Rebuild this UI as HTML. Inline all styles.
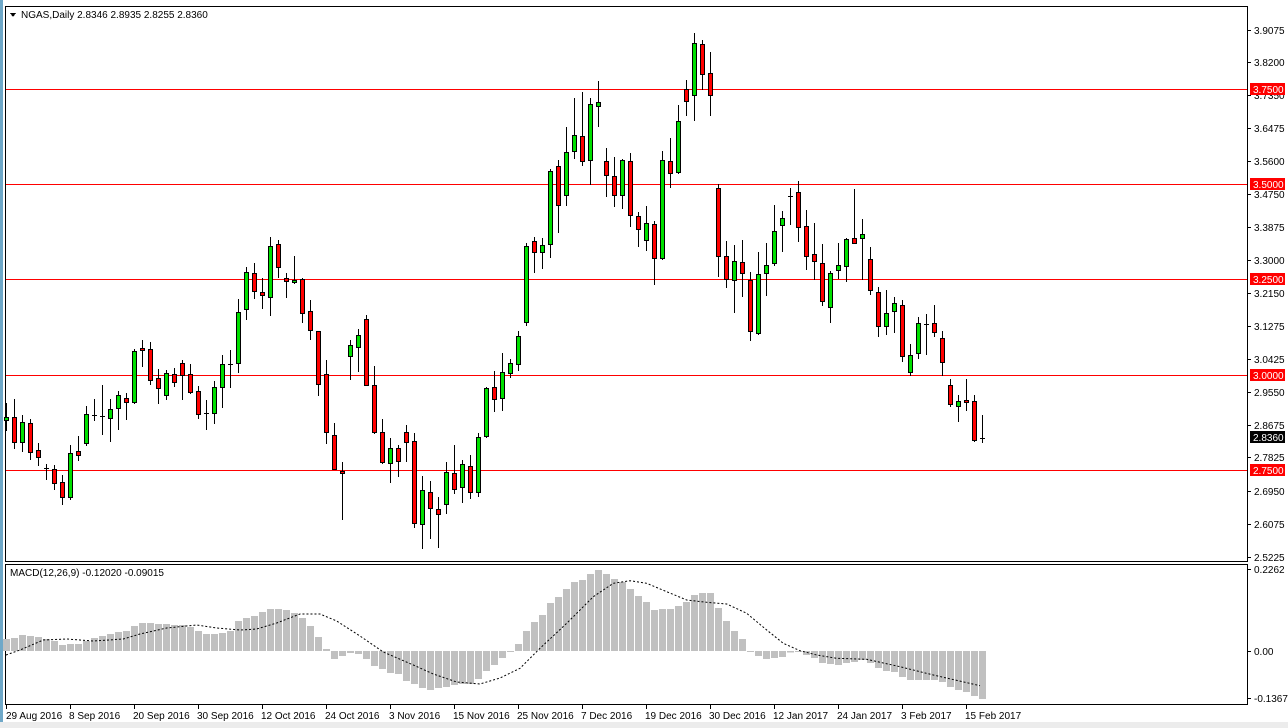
<!DOCTYPE html>
<html><head><meta charset="utf-8"><style>
html,body{margin:0;padding:0;background:#fff;width:1288px;height:728px;overflow:hidden}
svg{display:block}
text{font-family:"Liberation Sans",sans-serif;font-size:10px;fill:#000}
</style></head><body>
<svg id="s" width="1288" height="728" xmlns="http://www.w3.org/2000/svg" shape-rendering="crispEdges">
<rect x="0" y="0" width="1288" height="728" fill="#fff"/>
<rect x="0" y="0" width="3" height="728" fill="#6fa8c8"/>
<rect x="0" y="722" width="1288" height="6" fill="#ececec"/>
<!-- frames -->
<rect x="5.5" y="6.5" width="1242" height="555" fill="none" stroke="#000"/>
<rect x="5.5" y="564.5" width="1242" height="140" fill="none" stroke="#000"/>
<!-- header -->
<path d="M10 13 L16 13 L13 17 Z" fill="#000"/>
<text x="21" y="18" style="font-size:10px">NGAS,Daily  2.8346 2.8935 2.8255 2.8360</text>
<text x="10" y="576">MACD(12,26,9) -0.12020 -0.09015</text>
<!-- horizontal lines -->
<g stroke="#f00" stroke-width="1">
<line x1="6" y1="89.5" x2="1247" y2="89.5"/>
<line x1="6" y1="184.5" x2="1247" y2="184.5"/>
<line x1="6" y1="279.5" x2="1247" y2="279.5"/>
<line x1="6" y1="375.5" x2="1247" y2="375.5"/>
<line x1="6" y1="470.5" x2="1247" y2="470.5"/>
</g>
<g id="hist" fill="#c0c0c0"></g>
<g id="candles"></g>
<polyline id="sig" fill="none" stroke="#000" stroke-dasharray="2,2" shape-rendering="auto" points=""/>
<!-- price axis -->
<g stroke="#000">
<line x1="1248" y1="30.5" x2="1251" y2="30.5"/><line x1="1248" y1="62.5" x2="1251" y2="62.5"/><line x1="1248" y1="95.5" x2="1251" y2="95.5"/><line x1="1248" y1="128.5" x2="1251" y2="128.5"/><line x1="1248" y1="161.5" x2="1251" y2="161.5"/><line x1="1248" y1="194.5" x2="1251" y2="194.5"/><line x1="1248" y1="227.5" x2="1251" y2="227.5"/><line x1="1248" y1="260.5" x2="1251" y2="260.5"/><line x1="1248" y1="293.5" x2="1251" y2="293.5"/><line x1="1248" y1="326.5" x2="1251" y2="326.5"/><line x1="1248" y1="359.5" x2="1251" y2="359.5"/><line x1="1248" y1="392.5" x2="1251" y2="392.5"/><line x1="1248" y1="425.5" x2="1251" y2="425.5"/><line x1="1248" y1="457.5" x2="1251" y2="457.5"/><line x1="1248" y1="491.5" x2="1251" y2="491.5"/><line x1="1248" y1="524.5" x2="1251" y2="524.5"/><line x1="1248" y1="557.5" x2="1251" y2="557.5"/>
<line x1="1248" y1="569.5" x2="1251" y2="569.5"/><line x1="1248" y1="651.5" x2="1251" y2="651.5"/><line x1="1248" y1="698.5" x2="1251" y2="698.5"/>
</g>
<g>
<text x="1254" y="34">3.9075</text><text x="1254" y="66">3.8200</text><text x="1254" y="99">3.7350</text><text x="1254" y="132">3.6475</text><text x="1254" y="165">3.5600</text><text x="1254" y="198">3.4750</text><text x="1254" y="231">3.3875</text><text x="1254" y="264">3.3000</text><text x="1254" y="297">3.2150</text><text x="1254" y="330">3.1275</text><text x="1254" y="363">3.0425</text><text x="1254" y="396">2.9550</text><text x="1254" y="429">2.8675</text><text x="1254" y="461">2.7825</text><text x="1254" y="495">2.6950</text><text x="1254" y="528">2.6075</text><text x="1254" y="561">2.5225</text>
<text x="1254" y="573">0.2262</text><text x="1254" y="655">0.00</text><text x="1254" y="702">-0.1367</text>
</g>
<g>
<rect x="1250" y="83" width="35" height="12" fill="#f00"/><text x="1253" y="93" style="fill:#fff">3.7500</text>
<rect x="1250" y="178" width="35" height="12" fill="#f00"/><text x="1253" y="188" style="fill:#fff">3.5000</text>
<rect x="1250" y="273" width="35" height="12" fill="#f00"/><text x="1253" y="283" style="fill:#fff">3.2500</text>
<rect x="1250" y="369" width="35" height="12" fill="#f00"/><text x="1253" y="379" style="fill:#fff">3.0000</text>
<rect x="1250" y="464" width="35" height="12" fill="#f00"/><text x="1253" y="474" style="fill:#fff">2.7500</text>
<rect x="1250" y="431" width="35" height="12" fill="#000"/><text x="1253" y="441" style="fill:#fff">2.8360</text>
</g>
<!-- date axis -->
<g stroke="#000">
<line x1="6.5" y1="705" x2="6.5" y2="709"/><line x1="70.5" y1="705" x2="70.5" y2="709"/><line x1="134.5" y1="705" x2="134.5" y2="709"/><line x1="198.5" y1="705" x2="198.5" y2="709"/><line x1="262.5" y1="705" x2="262.5" y2="709"/><line x1="326.5" y1="705" x2="326.5" y2="709"/><line x1="390.5" y1="705" x2="390.5" y2="709"/><line x1="454.5" y1="705" x2="454.5" y2="709"/><line x1="518.5" y1="705" x2="518.5" y2="709"/><line x1="582.5" y1="705" x2="582.5" y2="709"/><line x1="646.5" y1="705" x2="646.5" y2="709"/><line x1="710.5" y1="705" x2="710.5" y2="709"/><line x1="774.5" y1="705" x2="774.5" y2="709"/><line x1="838.5" y1="705" x2="838.5" y2="709"/><line x1="902.5" y1="705" x2="902.5" y2="709"/><line x1="966.5" y1="705" x2="966.5" y2="709"/>
</g>
<g>
<text x="6" y="719">29 Aug 2016</text><text x="69" y="719">8 Sep 2016</text><text x="133" y="719">20 Sep 2016</text><text x="197" y="719">30 Sep 2016</text><text x="261" y="719">12 Oct 2016</text><text x="325" y="719">24 Oct 2016</text><text x="389" y="719">3 Nov 2016</text><text x="453" y="719">15 Nov 2016</text><text x="517" y="719">25 Nov 2016</text><text x="581" y="719">7 Dec 2016</text><text x="645" y="719">19 Dec 2016</text><text x="709" y="719">30 Dec 2016</text><text x="773" y="719">12 Jan 2017</text><text x="837" y="719">24 Jan 2017</text><text x="901" y="719">3 Feb 2017</text><text x="965" y="719">15 Feb 2017</text>
</g>
</svg>
<script>
var C=[[417,420,403,430,'g'],[417,442,399,448,'r'],[422,442,415,451,'g'],[423,452,419,459,'r'],[450,457,443,465,'r'],[468,468,464,479,'d'],[469,483,465,489,'r'],[482,497,475,504,'r'],[453,497,445,499,'g'],[451,455,436,460,'r'],[414,443,406,445,'g'],[415,415,399,420,'d'],[416,416,385,434,'d'],[409,418,399,441,'g'],[395,408,391,429,'g'],[398,402,393,419,'r'],[351,402,349,403,'g'],[348,350,340,366,'r'],[349,380,342,384,'r'],[378,388,369,403,'r'],[373,395,370,399,'g'],[374,382,368,386,'r'],[363,375,360,399,'r'],[374,392,364,393,'r'],[391,414,386,418,'r'],[413,413,400,429,'d'],[387,413,381,423,'g'],[364,387,355,407,'g'],[364,364,350,387,'d'],[312,363,299,372,'g'],[272,309,267,319,'g'],[273,291,263,298,'r'],[292,295,278,308,'r'],[246,297,237,315,'g'],[244,267,240,277,'r'],[278,281,273,297,'r'],[280,282,256,283,'g'],[279,313,278,322,'r'],[311,330,300,339,'r'],[331,384,331,395,'r'],[374,432,360,443,'r'],[435,469,423,469,'r'],[471,473,462,519,'r'],[345,356,340,379,'g'],[335,347,329,371,'g'],[319,385,315,385,'r'],[385,432,366,433,'r'],[432,462,419,463,'r'],[448,463,438,482,'g'],[448,461,445,476,'r'],[432,442,425,461,'r'],[441,523,433,527,'r'],[490,524,476,548,'g'],[492,508,481,538,'r'],[509,514,497,547,'r'],[472,504,462,513,'g'],[473,489,445,493,'r'],[464,487,460,502,'g'],[466,492,455,498,'r'],[437,492,433,496,'g'],[388,436,387,437,'g'],[387,399,371,411,'r'],[372,398,353,410,'g'],[363,373,359,377,'g'],[336,364,331,370,'g'],[246,322,243,325,'g'],[241,252,237,272,'r'],[245,252,238,268,'g'],[171,244,169,257,'g'],[166,205,160,232,'r'],[152,195,127,205,'g'],[135,151,98,158,'g'],[136,161,92,165,'r'],[104,160,98,184,'g'],[102,106,81,126,'g'],[161,175,148,196,'r'],[176,195,157,206,'r'],[160,195,159,208,'g'],[161,215,153,226,'r'],[216,229,212,246,'r'],[223,240,206,250,'g'],[224,258,221,284,'r'],[160,258,151,259,'g'],[161,173,138,187,'r'],[121,172,105,173,'g'],[89,101,80,115,'r'],[43,95,33,120,'g'],[44,74,40,89,'r'],[73,95,52,115,'r'],[188,256,184,276,'r'],[256,279,241,287,'r'],[261,280,245,312,'g'],[262,273,240,296,'r'],[280,331,272,340,'r'],[274,333,252,334,'g'],[265,273,243,295,'g'],[231,263,205,265,'g'],[218,225,211,251,'g'],[196,196,188,224,'d'],[192,227,181,241,'r'],[226,256,210,269,'r'],[254,261,223,279,'r'],[263,301,244,305,'r'],[273,307,271,322,'g'],[265,270,243,278,'g'],[239,266,238,281,'g'],[238,243,189,243,'r'],[234,238,219,279,'g'],[259,290,247,294,'r'],[292,326,287,336,'r'],[313,326,290,334,'g'],[303,311,297,332,'g'],[305,356,300,361,'r'],[355,372,344,375,'g'],[323,353,317,358,'g'],[324,324,314,354,'d'],[323,332,305,336,'r'],[338,362,331,375,'r'],[385,404,379,406,'r'],[401,406,395,421,'g'],[400,402,379,410,'r'],[401,440,395,441,'r'],[438,438,415,442,'d']];
var H=[237,234,225,228,231,237,243,255,252,252,243,234,228,222,216,213,198,189,189,192,192,195,195,201,213,222,222,219,213,183,174,168,156,147,147,150,159,174,198,231,267,297,288,279,282,297,318,327,339,342,363,372,384,390,384,381,375,372,372,357,333,315,294,275,252,213,186,165,129,111,87,66,60,42,30,42,57,66,87,108,126,150,147,147,138,126,105,99,99,144,183,213,237,275,288,297,294,291,278,275,285,294,309,312,315,309,306,300,309,324,333,336,351,360,360,360,360,366,381,390,396,408,417];
var NS='http://www.w3.org/2000/svg',cg=document.getElementById('candles'),hg=document.getElementById('hist');
function el(t,a,p){var e=document.createElementNS(NS,t);for(var k in a)e.setAttribute(k,a[k]);p.appendChild(e);return e;}
for(var i=0;i<C.length;i++){var c=C[i],x=6+8*i;
el('line',{x1:x+.5,y1:c[2],x2:x+.5,y2:c[3]+1,stroke:'#000'},cg);
if(c[4]=='d'){el('rect',{x:x-2,y:c[0],width:5,height:1,fill:'#000'},cg);}
else{var h=Math.max(1,c[1]-c[0]);el('rect',{x:x-1.5,y:c[0]+.5,width:4,height:h,fill:c[4]=='g'?'#00e000':'#ff0000',stroke:'#000'},cg);}
}
for(var i=0;i<H.length;i++){var y=560+H[i]/3,x=3+8*i,z=651;
var t=Math.min(y,z),b=Math.max(y,z);el('rect',{x:x,y:t,width:7,height:Math.max(1,b-t)},hg);}
var S=[[18,285],[60,270],[130,240],[200,237],[280,243],[370,237],[420,222],[500,204],[590,195],[650,204],[720,210],[770,207],[830,189],[900,162],[960,162],[1010,183],[1080,228],[1150,276],[1240,315],[1300,342],[1370,366],[1440,372],[1500,354]];
var S2=[[60,325],[120,265],[200,190],[280,110],[340,70],[390,62],[440,70],[500,95],[560,120],[620,127],[680,132],[740,160],[800,210],[850,250],[900,272],[950,285],[1010,295],[1100,298],[1200,320],[1300,345],[1440,377]];
var pts=[];S.forEach(function(p){pts.push((p[0]/3).toFixed(1)+','+(560+p[1]/3).toFixed(1));});
S2.forEach(function(p){pts.push((500+p[0]/3).toFixed(1)+','+(560+p[1]/3).toFixed(1));});
document.getElementById('sig').setAttribute('points',pts.join(' '));
</script>
</body></html>
